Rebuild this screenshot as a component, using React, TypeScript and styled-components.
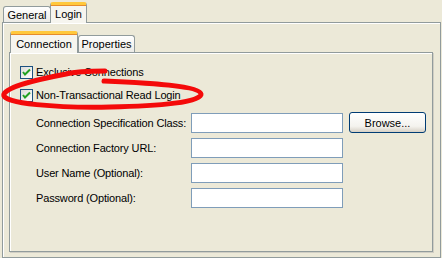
import styled, { createGlobalStyle, css } from 'styled-components';

const Global = createGlobalStyle`
  html, body {
    margin: 0;
    padding: 0;
    background: #ece9d8;
  }
  body {
    font-family: "Liberation Sans", Arial, sans-serif;
    font-size: 11px;
    color: #000;
  }
`;

const App = () => (
  <Page>
    <Global />
    <TabStrip>
      <Tab>General</Tab>
      <Tab active>Login</Tab>
    </TabStrip>
    <OuterPanel>
      <TabStrip inner>
        <Tab active inner>Connection</Tab>
        <Tab inner>Properties</Tab>
      </TabStrip>
      <InnerPanel>
        <CheckRow>
          <CheckBox checked />
          <span>Exclusive Connections</span>
        </CheckRow>
        <CheckRow>
          <CheckBox checked />
          <span>Non-Transactional Read Login</span>
        </CheckRow>
        <Form>
          <Label>Connection Specification Class:</Label>
          <Input />
          <Button>Browse...</Button>
          <Label>Connection Factory URL:</Label>
          <Input />
          <span />
          <Label>User Name (Optional):</Label>
          <Input />
          <span />
          <Label>Password (Optional):</Label>
          <Input />
          <span />
        </Form>
      </InnerPanel>
    </OuterPanel>
    <Annotation width="442" height="258" viewBox="0 0 442 258">
      <path
        d="M105 71 C90 71 78 71 66 74 C40 79 8 86 4 94 C0 104 60 108 110 107 C160 106 202 102 201 94 C200 86 150 83 104 81"
        fill="none"
        stroke="#f40a0a"
        strokeWidth="5"
        strokeLinecap="round"
      />
    </Annotation>
  </Page>
);

const CheckBox = ({ checked }: { checked?: boolean }) => (
  <Box>
    {checked && (
      <svg width="11" height="11" viewBox="0 0 11 11">
        <path d="M2 5 L4 7.5 L9 2.5" fill="none" stroke="#21a121" strokeWidth="2" />
      </svg>
    )}
  </Box>
);

const Page = styled.div`
  position: relative;
  width: 442px;
  height: 258px;
  padding: 2px 2px 0 2px;
  box-sizing: border-box;
`;

const TabStrip = styled.div<{ inner?: boolean }>`
  display: flex;
  align-items: flex-end;
  height: ${(p) => (p.inner ? '21px' : '20px')};
  padding-left: 1px;
  position: relative;
  z-index: 1;
`;

const Tab = styled.div<{ active?: boolean; inner?: boolean }>`
  box-sizing: border-box;
  display: flex;
  align-items: center;
  justify-content: center;
  border: 1px solid #919b9c;
  border-bottom: none;
  border-radius: 3px 3px 0 0;
  height: ${(p) => (p.inner ? '17px' : '16px')};
  width: ${(p) => (p.inner ? '57px' : '48px')};
  background: linear-gradient(#ffffff, #ecebe6);
  ${(p) =>
    p.active &&
    css`
      height: ${p.inner ? '22px' : '21px'};
      width: ${p.inner ? '68px' : '37px'};
      margin-bottom: -1px;
      background: #f6f5ef;
      border-top: 3px solid #ffc83c;
      box-shadow: inset 0 1px 0 #e68b2c;
    `}
  ${(p) => (!p.inner && p.active ? 'margin-left: -1px;' : '')}
`;

const OuterPanel = styled.div`
  box-sizing: border-box;
  width: 439px;
  height: 236px;
  border: 1px solid #919b9c;
  box-shadow: inset 1px 1px 0 #fff;
  padding: 8px 7px 0 6px;
`;

const InnerPanel = styled.div`
  box-sizing: border-box;
  width: 424px;
  height: 200px;
  border: 1px solid #919b9c;
  box-shadow: inset 1px 1px 0 #fff, 1px 1px 0 #d0cec4;
  padding: 12px 0 0 10px;
  display: flex;
  flex-direction: column;
  letter-spacing: -0.15px;
`;

const CheckRow = styled.label`
  display: flex;
  align-items: center;
  gap: 3px;
  height: 14px;
  margin-bottom: 9px;
`;

const Box = styled.span`
  box-sizing: border-box;
  width: 13px;
  height: 13px;
  border: 1px solid #1c5180;
  background: linear-gradient(135deg, #dcdcd7, #ffffff);
  display: flex;
  align-items: center;
  justify-content: center;
`;

const Form = styled.div`
  display: grid;
  grid-template-columns: 149px 152px 77px;
  grid-auto-rows: 20px;
  grid-template-rows: 21px;
  column-gap: 6px;
  row-gap: 5px;
  align-items: center;
  margin-top: 1px;
  padding-left: 16px;
`;

const Label = styled.span`
  white-space: nowrap;
`;

const Input = styled.div`
  box-sizing: border-box;
  height: 20px;
  border: 1px solid #7f9db9;
  background: #fff;
`;

const Button = styled.button`
  box-sizing: border-box;
  height: 21px;
  border: 1px solid #003c74;
  border-radius: 3px;
  background: linear-gradient(#ffffff 0%, #f4f3ee 70%, #d6d0c5 100%);
  font-family: "Liberation Sans", Arial, sans-serif;
  font-size: 11px;
  color: #000;
  padding: 0;
`;

const Annotation = styled.svg`
  position: absolute;
  left: 0;
  top: 0;
  pointer-events: none;
`;

export default App;
